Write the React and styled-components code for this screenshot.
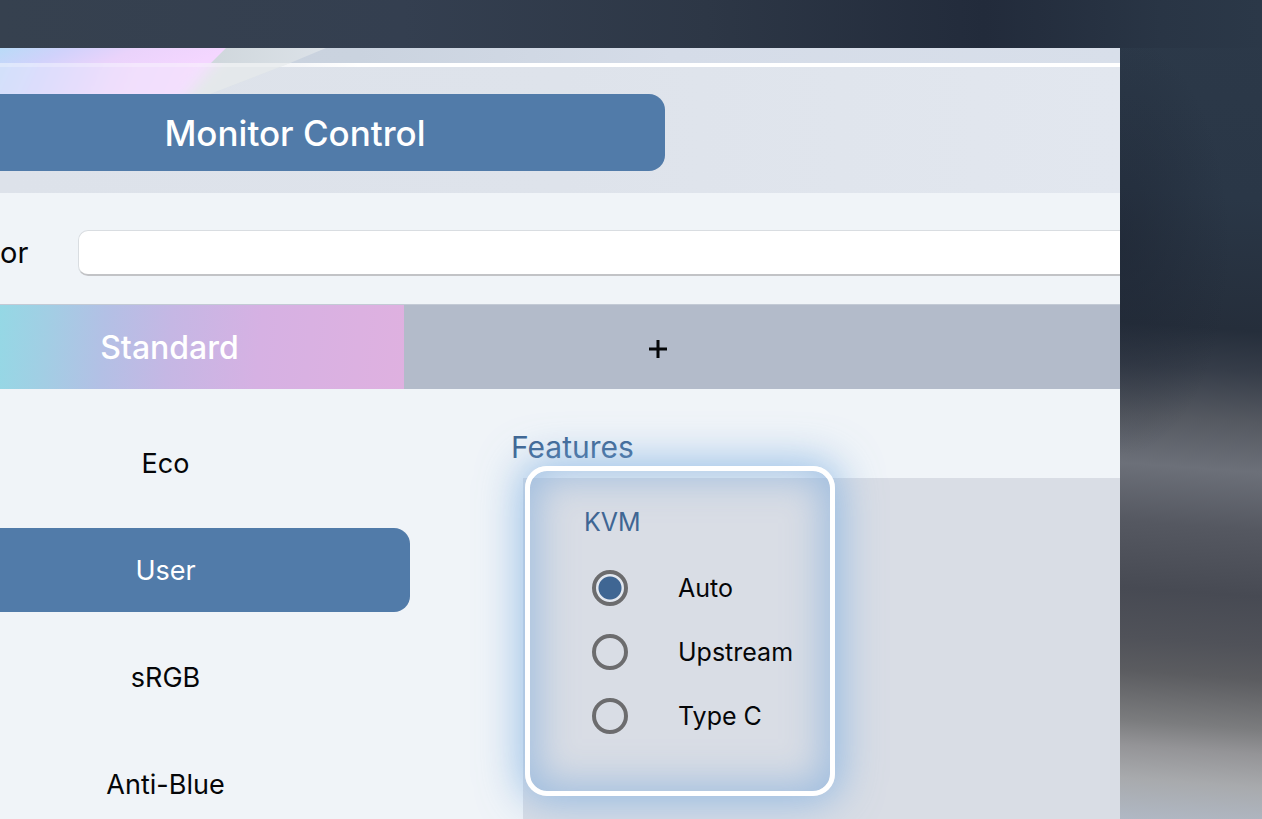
import React, { useState } from 'react';
import styled, { createGlobalStyle } from 'styled-components';

const GlobalStyle = createGlobalStyle`
* {
  box-sizing: border-box;
}
body {
  margin: 0;
  font-family: Inter, "Liberation Sans", sans-serif;
  color: #050608;
}
button, input {
  font: inherit;
  color: inherit;
}
`;

const Desktop = styled.div`
height: 100vh;
overflow: hidden;
display: flex;
flex-direction: column;
padding: 48px 142px 0 0;
background-color: #2b3848;
background-image:
  linear-gradient(90deg, #36414f 0, #343f50 32%, #2d3746 56%, #222b3b 78%, #293545 92%, #2b3848 100%),
  radial-gradient(ellipse 110px 210px at 0 30%, rgba(30, 38, 52, 0.6) 0, rgba(30, 38, 52, 0) 100%),
  linear-gradient(184deg, #2c3949 0, #2a3747 24%, #252e3b 40%, #363d49 45%, #555961 51%, #6c7079 57%, #555861 64%, #474a53 72%, #505259 78%, #5b5c60 82%, #7b7c7e 88%, #949497 91%, #a8aaad 95%, #b0b8c4 100%);
background-size: 100% 48px, 142px 100%, 142px 100%;
background-position: 0 0, right top, right top;
background-repeat: no-repeat;
`;

const Window = styled.main`
position: relative;
flex: 1;
min-height: 0;
overflow: hidden;
background-color: #f0f4f8;
`;

const Wallpaper = styled.svg`
position: absolute;
top: 0;
left: 0;
`;

const TitleBar = styled.div`
height: 15px;
background-image: linear-gradient(90deg, #c9d1de 0, #cad3df 32%, #d5dce8 60%, #d8dfea 100%);
`;

const Header = styled.header`
position: relative;
padding: 31px 0 22px;
background-image: linear-gradient(90deg, #dde2ea 0, #dee3eb 50%, #e2e7ef 100%);
`;

const HeaderLine = styled.div`
position: absolute;
top: 0;
left: 0;
right: 0;
height: 4px;
background-image: linear-gradient(90deg, rgba(255, 255, 255, 0) 0, rgba(255, 255, 255, 0.2) 16%, #ffffff 32%);
`;

const PageTab = styled.button`
display: block;
width: 665px;
height: 77px;
padding: 0 75px 0 0;
border: none;
border-radius: 0 16px 16px 0;
background-color: #517ba9;
color: white;
font-size: 35px;
font-weight: 500;
`;

const MonitorRow = styled.div`
display: flex;
align-items: center;
height: 111px;
padding-top: 8px;
font-size: 29px;
`;

const MonitorLabel = styled.label`
width: 78px;
flex: none;
`;

const MonitorInput = styled.input`
flex: 1;
min-width: 0;
height: 46px;
padding: 0 16px;
border: 1px solid #d9dde1;
border-right: none;
border-bottom: 2px solid #c2c3c6;
border-radius: 10px 0 0 10px;
background-color: white;
`;

const PresetBar = styled.nav`
display: flex;
height: 85px;
background-color: #b3bbca;
border-top: 1px solid #c3cad5;
`;

const PresetTab = styled.button`
width: 404px;
padding: 0 65px 0 0;
border: none;
background-image: linear-gradient(95deg, #95d8e5 0, #a2cee4 12%, #b3c0e5 26%, #c5b7e4 42%, #d6b1e3 64%, #dfb1e0 100%);
color: white;
font-size: 32px;
font-weight: 500;
`;

const AddTab = styled.button`
width: 508px;
padding: 4px 0 0;
border: none;
background: none;
line-height: 0;
`;

const Body = styled.div`
display: flex;
align-items: flex-start;
`;

const ModeList = styled.div`
display: flex;
flex-direction: column;
gap: 23px;
width: 410px;
flex: none;
padding-top: 32px;
`;

const ModeButton = styled.button`
height: 84px;
padding: 0 79px 0 0;
border: none;
border-radius: 0 16px 16px 0;
background-color: ${props => props.$active ? '#517ba9' : 'transparent'};
color: ${props => props.$active ? 'white' : '#050608'};
font-size: 27px;
`;

const Features = styled.section`
flex: 1;
padding: 38px 0 0 101px;
`;

const FeaturesTitle = styled.h2`
margin: 0;
height: 51px;
font-size: 30px;
line-height: 40px;
font-weight: 400;
color: #3f6693;
`;

const FeaturesPanel = styled.div`
position: relative;
margin-left: 12px;
min-height: 460px;
background-color: #d9dde5;
`;

const Highlight = styled.div`
position: absolute;
top: -12px;
left: 2px;
width: 310px;
height: 330px;
border: 5px solid white;
border-radius: 22px;
box-shadow: 0 0 40px 6px rgba(120, 172, 225, 0.7), inset 0 0 36px 8px rgba(130, 174, 220, 0.65);
pointer-events: none;
`;

const RadioGroup = styled.fieldset`
display: flex;
flex-direction: column;
gap: 28px;
margin: 0;
padding: 28px 0 0 61px;
border: none;
`;

const GroupTitle = styled.legend`
float: left;
height: 36px;
padding: 0;
font-size: 25px;
line-height: 32px;
color: #3f6693;
`;

const RadioLabel = styled.label`
display: flex;
align-items: center;
gap: 50px;
height: 36px;
padding-left: 8px;
font-size: 25px;
`;

const Radio = styled.input`
appearance: none;
width: 36px;
height: 36px;
margin: 0;
border: 4px solid #6c6c6e;
border-radius: 50%;
&:checked {
  background-image: radial-gradient(circle, #3f6693 11px, #e3e8f0 12px);
}
`;

const modes = ['Eco', 'User', 'sRGB', 'Anti-Blue'];
const inputs = ['Auto', 'Upstream', 'Type C'];

export default function App () {
    const [mode, setMode] = useState('User');
    const [kvm, setKvm] = useState('Auto');

    return (
        <Desktop>
            <GlobalStyle />
            <Window>
                <TitleBar />
                <Header>
                    <HeaderLine />
                    <PageTab type="button">Monitor Control</PageTab>
                </Header>
                {/* coloured ribbons that run down behind the page tab */}
                <Wallpaper width="330" height="46" viewBox="0 0 330 46" aria-hidden="true">
                    <defs>
                        <linearGradient id="ribbon" x1="0" y1="0" x2="1" y2="0.15">
                            <stop offset="0" stopColor="#b9dbf7" />
                            <stop offset="0.3" stopColor="#d0d2fb" />
                            <stop offset="0.6" stopColor="#ead3fb" />
                            <stop offset="1" stopColor="#f4d6ff" />
                        </linearGradient>
                        <linearGradient id="fold" x1="0" y1="0" x2="1" y2="0">
                            <stop offset="0" stopColor="#ccd4d9" />
                            <stop offset="1" stopColor="#dce2e8" />
                        </linearGradient>
                        <filter id="soft" x="-10%" y="-40%" width="120%" height="180%">
                            <feGaussianBlur stdDeviation="7" />
                        </filter>
                        <clipPath id="lower">
                            <rect y="15" width="330" height="31" />
                        </clipPath>
                    </defs>
                    <path d="M180 0H326L290 15H180Z" fill="url(#fold)" />
                    <path d="M0 0H226L211 15H0Z" fill="url(#ribbon)" />
                    <g clipPath="url(#lower)">
                        <path d="M150 15H290L210 46H150Z" fill="#dbe1e4" />
                        <path d="M-20 -20H244L172 66H-20Z" fill="url(#ribbon)" filter="url(#soft)" />
                        <path d="M0 15H290L210 46H0Z" fill="#ffffff" fillOpacity="0.25" />
                        <path d="M0 15H290L280 19H0Z" fill="#ffffff" fillOpacity="0.25" />
                    </g>
                </Wallpaper>
                <MonitorRow>
                    <MonitorLabel htmlFor="monitor">or</MonitorLabel>
                    <MonitorInput id="monitor" type="text" />
                </MonitorRow>
                <PresetBar>
                    <PresetTab type="button">Standard</PresetTab>
                    <AddTab type="button" aria-label="Add preset">
                        <svg width="20" height="20" viewBox="0 0 20 20" stroke="#050608" strokeWidth="3">
                            <path d="M10 1V19M1 10H19" />
                        </svg>
                    </AddTab>
                </PresetBar>
                <Body>
                    <ModeList>
                        {modes.map(name => (
                            <ModeButton
                                key={name}
                                type="button"
                                $active={name === mode}
                                onClick={() => setMode(name)}
                            >
                                {name}
                            </ModeButton>
                        ))}
                    </ModeList>
                    <Features>
                        <FeaturesTitle>Features</FeaturesTitle>
                        <FeaturesPanel>
                            <Highlight />
                            <RadioGroup>
                                <GroupTitle>KVM</GroupTitle>
                                {inputs.map(name => (
                                    <RadioLabel key={name}>
                                        <Radio
                                            type="radio"
                                            name="kvm"
                                            checked={name === kvm}
                                            onChange={() => setKvm(name)}
                                        />
                                        {name}
                                    </RadioLabel>
                                ))}
                            </RadioGroup>
                        </FeaturesPanel>
                    </Features>
                </Body>
            </Window>
        </Desktop>
    );
}
